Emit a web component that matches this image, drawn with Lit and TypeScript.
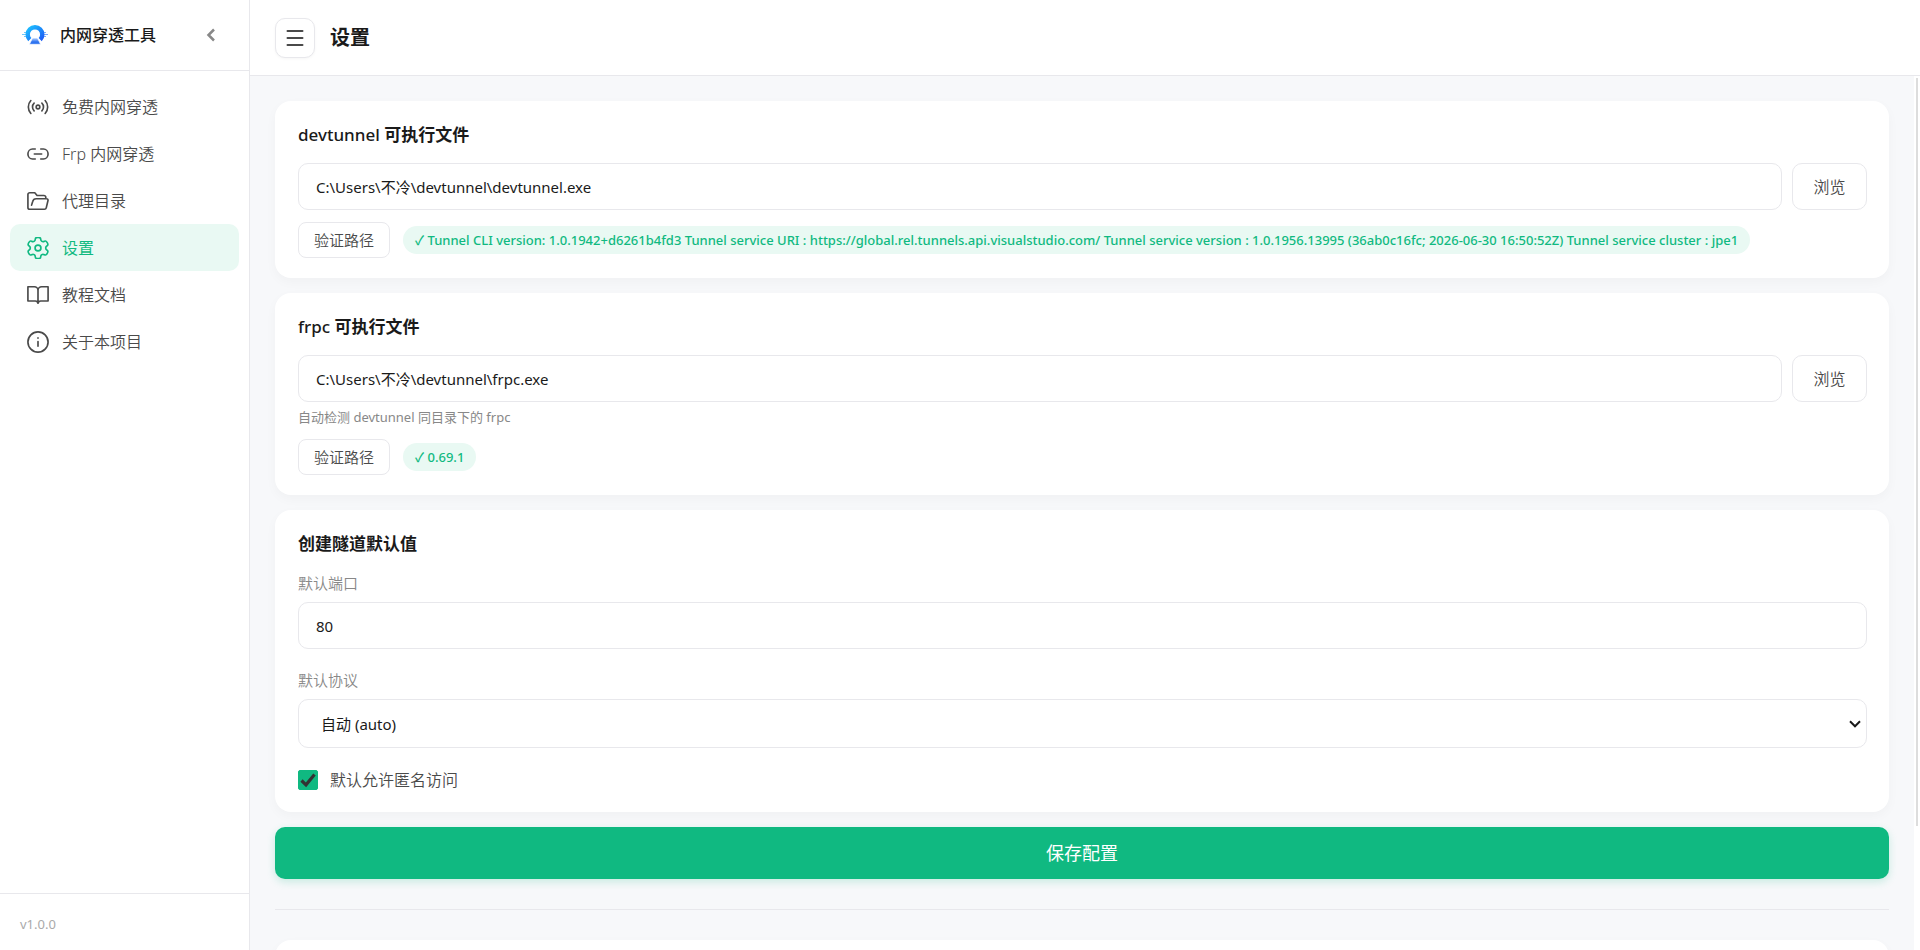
import { LitElement, html, svg, css, TemplateResult } from "lit";
import { customElement, state } from "lit/decorators.js";
import { classMap } from "lit/directives/class-map.js";

interface NavItem {
  id: string;
  label: string;
  icon: TemplateResult;
}

/** Closed six-lobed gear outline, smoothed through the midpoints of its control polygon. */
function gearPath(): string {
  const pts: [number, number][] = [];
  const add = (deg: number, r: number) => {
    const a = ((deg - 90) * Math.PI) / 180;
    pts.push([12 + r * Math.cos(a), 12 + r * Math.sin(a)]);
  };
  for (let i = 0; i < 6; i++) {
    add(i * 60 - 14, 12);
    add(i * 60 + 14, 12);
    add(i * 60 + 20, 8.5);
    add(i * 60 + 40, 8.5);
  }
  const mid = (p: number[], q: number[]) => `${((p[0] + q[0]) / 2).toFixed(2)} ${((p[1] + q[1]) / 2).toFixed(2)}`;
  const n = pts.length;
  let d = `M${mid(pts[n - 1], pts[0])}`;
  pts.forEach((p, i) => {
    d += `Q${p[0].toFixed(2)} ${p[1].toFixed(2)} ${mid(p, pts[(i + 1) % n])}`;
  });
  return d + "z";
}

const NAV: NavItem[] = [
  {
    id: "free",
    label: "免费内网穿透",
    icon: svg`<circle cx="12" cy="12" r="2"/><path d="M16.24 7.76a6 6 0 0 1 0 8.49M7.76 16.24a6 6 0 0 1 0-8.49M19.8 4.93a10.500 10.500 0 0 1 0 14.14M4.200 19.07a10.500 10.500 0 0 1 0-14.14"/>`,
  },
  {
    id: "frp",
    label: "Frp 内网穿透",
    icon: svg`<path d="M15 6.500h3a5 5.500 0 0 1 0 11h-3M9 17.500H6A5 5.500 0 0 1 6 6.500h3M8 12h8"/>`,
  },
  {
    id: "proxy",
    label: "代理目录",
    icon: svg`<path d="M20.500 9.500V8a2 2 0 0 0-2-2H11L8.500 3H3a2 2 0 0 0-2 2v14a2 2 0 0 0 2 2h16a2 2 0 0 0 2-1.500l1.900-8a1.600 1.600 0 0 0-1.600-2H10a4 4 0 0 0-3.800 3L5 16.500"/>`,
  },
  {
    id: "settings",
    label: "设置",
    icon: svg`<circle cx="12" cy="12" r="3.200"/><path d=${gearPath()} />`,
  },
  {
    id: "docs",
    label: "教程文档",
    icon: svg`<path d="M1 3h7a4 4 0 0 1 4 4v14a3 3 0 0 0-3-2.500H1zM23 3h-7a4 4 0 0 0-4 4v14a3 3 0 0 1 3-2.500h8z"/>`,
  },
  {
    id: "about",
    label: "关于本项目",
    icon: svg`<circle cx="12" cy="12" r="11"/><path d="M12 11.500v5M12 7.500v.3"/>`,
  },
];

@customElement("app-root")
export class AppRoot extends LitElement {
  @state() private active = "settings";

  static styles = css`
    :host {
      display: flex;
      height: 100vh;
      overflow: hidden;
      box-sizing: border-box;
      color: #1a1a1a;
      background: #f7f8fa;
      font: 350 16px/24px "Noto Sans", "Noto Sans CJK SC", sans-serif;
    }
    * {
      box-sizing: border-box;
    }
    button,
    input,
    select {
      font: inherit;
      color: inherit;
      margin: 0;
    }
    button {
      cursor: pointer;
    }
    h1,
    h2,
    p {
      margin: 0;
    }
    .sidebar {
      display: flex;
      flex-direction: column;
      flex: none;
      width: 250px;
      background: #fff;
      border-right: 1px solid #e8e8ec;
    }
    .brand {
      display: flex;
      align-items: center;
      gap: 12px;
      height: 71px;
      padding: 0 22px;
      border-bottom: 1px solid #e8e8ec;
    }
    .brand-name {
      flex: 1;
      font-weight: 500;
    }
    .logo {
      width: 26px;
      height: 26px;
    }
    .collapse {
      display: grid;
      place-items: center;
      width: 32px;
      height: 32px;
      padding: 0;
      border: 0;
      background: none;
      color: #888;
    }
    .nav {
      flex: 1;
      padding: 12px 10px;
    }
    .nav-item {
      display: flex;
      align-items: center;
      gap: 13px;
      height: 47px;
      padding: 0 17px;
      border-radius: 10px;
      color: #4a4a4a;
      text-decoration: none;
    }
    .nav-item.active {
      background: #e9f9f3;
      color: #10b981;
      font-weight: 400;
    }
    .icon {
      width: 22px;
      height: 22px;
      fill: none;
      stroke: currentColor;
      stroke-width: 1.8;
      stroke-linecap: round;
      stroke-linejoin: round;
    }
    .version {
      padding: 18px 20px 14px;
      border-top: 1px solid #e8e8ec;
      color: #aaa;
      font-size: 13px;
      font-weight: 400;
    }
    .main {
      display: flex;
      flex-direction: column;
      flex: 1;
      min-width: 0;
    }
    .topbar {
      display: flex;
      align-items: center;
      gap: 15px;
      height: 76px;
      flex: none;
      padding: 0 25px;
      background: #fff;
      border-bottom: 1px solid #e8e8ec;
    }
    .menu {
      display: grid;
      place-items: center;
      width: 40px;
      height: 40px;
      padding: 0;
      border: 1px solid #e8e8ec;
      border-radius: 10px;
      background: #fff;
      color: #4a4a4a;
      box-shadow: 0 1px 3px rgba(0, 0, 0, 0.04);
    }
    h1 {
      font-size: 20px;
      line-height: 28px;
      font-weight: 700;
    }
    .body {
      display: flex;
      flex: 1;
      min-height: 0;
    }
    .content {
      flex: 1;
      min-width: 0;
      overflow: hidden;
      padding: 25px;
    }
    .track {
      width: 6px;
      padding: 2px;
      background: #fff;
    }
    .thumb {
      background: #ddd;
    }
    .card {
      margin-bottom: 15px;
      padding: 22px 22px 20px 23px;
      border-radius: 16px;
      background: #fff;
      box-shadow: 0 4px 12px rgba(0, 0, 0, 0.03);
    }
    h2 {
      margin-bottom: 16px;
      font-size: 17px;
      line-height: 24px;
      font-weight: 700;
    }
    .latin {
      font-weight: 500;
    }
    .row {
      display: flex;
      gap: 10px;
    }
    .field {
      display: block;
      flex: 1;
      width: 100%;
      min-width: 0;
      height: 47px;
      padding: 0 17px;
      border: 1px solid #e8e8ec;
      border-radius: 10px;
      background: #fff;
      font-size: 15px;
      font-weight: 400;
      outline: none;
    }
    select.field {
      appearance: none;
      height: 49px;
      padding: 0 32px 0 22px;
      background: #fff
        url("data:image/svg+xml,%3Csvg xmlns='http://www.w3.org/2000/svg' width='12' height='8' fill='none' stroke='%231a1a1a' stroke-width='2'%3E%3Cpath d='M1 1.300 6 6.300 11 1.300'/%3E%3C/svg%3E")
        no-repeat right 5px center;
    }
    .browse {
      width: 75px;
      padding: 0;
      border: 1px solid #e8e8ec;
      border-radius: 10px;
      background: #fff;
      color: #4a4a4a;
    }
    .hint {
      margin-top: 5px;
      color: #888;
      font-size: 13px;
      line-height: 20px;
      font-weight: 400;
    }
    .verify {
      display: flex;
      align-items: center;
      gap: 13px;
      margin-top: 12px;
    }
    .verify button {
      width: 92px;
      height: 36px;
      padding: 0;
      border: 1px solid #e8e8ec;
      border-radius: 8px;
      background: #fff;
      color: #4a4a4a;
      font-size: 15px;
    }
    .badge {
      padding: 4px 12px;
      border-radius: 14px;
      background: #e9f9f3;
      color: #10b981;
      font-size: 13px;
      line-height: 20px;
      font-weight: 500;
    }
    .label {
      display: block;
      margin-bottom: 8px;
      color: #888;
      font-size: 15px;
      line-height: 22px;
    }
    .group {
      margin-bottom: 20px;
    }
    .check {
      display: flex;
      align-items: center;
      gap: 12px;
      color: #4a4a4a;
    }
    .box {
      display: grid;
      width: 20px;
      height: 20px;
    }
    .box > * {
      grid-area: 1 / 1;
    }
    .box input {
      appearance: none;
      border: 1px solid #aaa;
      border-radius: 2px;
    }
    .box input:checked {
      border-color: #10b981;
      background: #10b981;
    }
    .box svg {
      width: 20px;
      height: 20px;
      pointer-events: none;
    }
    .box input:not(:checked) + svg {
      visibility: hidden;
    }
    .save {
      display: block;
      width: 100%;
      height: 52px;
      border: 0;
      border-radius: 10px;
      background: #10b981;
      color: #fff;
      font-size: 18px;
      font-weight: 400;
      box-shadow: 0 3px 8px rgba(16, 185, 129, 0.2);
    }
    hr {
      height: 1px;
      margin: 30px 0;
      border: 0;
      background: #e8e8ec;
    }
    .next {
      height: 120px;
    }
  `;

  private sidebar() {
    return html`<aside class="sidebar">
      <div class="brand">
        <svg class="logo" viewBox="0 0 26 26" aria-hidden="true">
          <defs>
            <linearGradient id="ring" x1="0" x2="1" y1="0" y2="1">
              <stop offset="0" stop-color="#1cc0ff" />
              <stop offset="1" stop-color="#1d5cf5" />
            </linearGradient>
            <linearGradient id="road" x1="0" x2="0" y1="0" y2="1">
              <stop offset="0" stop-color="#b9d4ff" />
              <stop offset="0.6" stop-color="#2f74f0" />
            </linearGradient>
          </defs>
          <path d="M2 10.500h3M0 12.500h4M2 14.500h3" stroke="#6cc8fc" />
          <path d="M21 10.500h3M22 12.500h4M21 14.500h3" stroke="#7cacfa" />
          <path d="M7.800 17.600a7.300 7.300 0 1 1 10.400 0" fill="none" stroke="url(#ring)" stroke-width="4.400" />
          <path d="M10.500 16h5l3 6.300h-11z" fill="url(#road)" stroke="#fff" stroke-width="0.600" />
        </svg>
        <span class="brand-name">内网穿透工具</span>
        <button class="collapse" aria-label="收起">
          <svg width="10" height="14" viewBox="0 0 10 14" fill="none" stroke="currentColor" stroke-width="2.500">
            <path d="M8 1.500 2.500 7 8 12.500" />
          </svg>
        </button>
      </div>
      <nav class="nav">
        ${NAV.map(
          (n) => html`<a
            href="#${n.id}"
            class=${classMap({ "nav-item": true, active: n.id === this.active })}
            @click=${() => (this.active = n.id)}
            ><svg class="icon" viewBox="0 0 24 24" aria-hidden="true">${n.icon}</svg>${n.label}</a
          >`,
        )}
      </nav>
      <div class="version">v1.0.0</div>
    </aside>`;
  }

  private pathCard(name: string, value: string, result: string, hint?: string) {
    return html`<section class="card">
      <h2><span class="latin">${name}</span> 可执行文件</h2>
      <div class="row">
        <input class="field" type="text" aria-label="${name} 可执行文件" .value=${value} />
        <button class="browse">浏览</button>
      </div>
      ${hint ? html`<p class="hint">${hint}</p>` : ""}
      <div class="verify"><button>验证路径</button><span class="badge">✓ ${result}</span></div>
    </section>`;
  }

  render() {
    return html`
      ${this.sidebar()}
      <main class="main">
        <header class="topbar">
          <button class="menu" aria-label="菜单">
            <svg width="18" height="18" viewBox="0 0 18 18" fill="none" stroke="currentColor" stroke-width="2" stroke-linecap="round">
              <path d="M1.500 2h15M1.500 9h15M1.500 16h15" />
            </svg>
          </button>
          <h1>设置</h1>
        </header>
        <div class="body">
          <div class="content">
            ${this.pathCard(
              "devtunnel",
              "C:\\Users\\不冷\\devtunnel\\devtunnel.exe",
              "Tunnel CLI version: 1.0.1942+d6261b4fd3 Tunnel service URI : https://global.rel.tunnels.api.visualstudio.com/ Tunnel service version : 1.0.1956.13995 (36ab0c16fc; 2026-06-30 16:50:52Z) Tunnel service cluster : jpe1",
            )}
            ${this.pathCard("frpc", "C:\\Users\\不冷\\devtunnel\\frpc.exe", "0.69.1", "自动检测 devtunnel 同目录下的 frpc")}
            <section class="card">
              <h2>创建隧道默认值</h2>
              <div class="group">
                <label class="label" for="port">默认端口</label>
                <input class="field" id="port" type="text" inputmode="numeric" .value=${"80"} />
              </div>
              <div class="group">
                <label class="label" for="protocol">默认协议</label>
                <select class="field" id="protocol">
                  <option>自动 (auto)</option>
                </select>
              </div>
              <label class="check">
                <span class="box">
                  <input type="checkbox" checked />
                  <svg viewBox="0 0 20 20" fill="none" stroke="#333" stroke-width="3.200">
                    <path d="M3.500 10.500 8 14.800 16.500 4.500" />
                  </svg>
                </span>
                默认允许匿名访问
              </label>
            </section>
            <button class="save">保存配置</button>
            <hr />
            <section class="card next"></section>
          </div>
          <div class="track"><div class="thumb" style="height:86%"></div></div>
        </div>
      </main>
    `;
  }
}
